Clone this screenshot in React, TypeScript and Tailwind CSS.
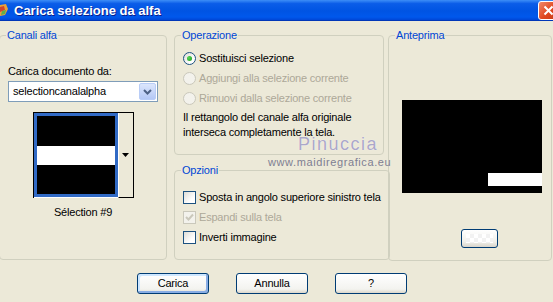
import React from "react";

function Radio({ label, checked, disabled }: { label: string; checked?: boolean; disabled?: boolean }) {
  return (
    <div className="flex h-[20px] items-center gap-[3px]">
      <span
        className={
          disabled
            ? "flex h-[13px] w-[13px] items-center justify-center rounded-full border border-[#CAC8BB] bg-[#F3F2EC]"
            : "flex h-[13px] w-[13px] items-center justify-center rounded-full border border-[#1C5180] bg-[linear-gradient(135deg,#DCDCD7,#FFFFFF_70%)]"
        }
      >
        {checked && <span className="h-[5px] w-[5px] rounded-full bg-[radial-gradient(circle_at_35%_35%,#55D655,#1A9A1A)]" />}
      </span>
      <span className={disabled ? "whitespace-nowrap text-[#ACA899]" : "whitespace-nowrap text-black"}>{label}</span>
    </div>
  );
}

function Check({ label, checked, disabled }: { label: string; checked?: boolean; disabled?: boolean }) {
  return (
    <div className="flex h-[20px] items-center gap-[3px]">
      <span
        className={
          disabled
            ? "flex h-[13px] w-[13px] items-center justify-center border border-[#CAC8BB] bg-[#F3F2EC]"
            : "flex h-[13px] w-[13px] items-center justify-center border border-[#1C5180] bg-[linear-gradient(135deg,#DCDCD7,#FFFFFF_70%)]"
        }
      >
        {checked && (
          <svg width="9" height="9" viewBox="0 0 9 9">
            <path d="M1 4 L3.5 6.5 L8 1.5" fill="none" stroke={disabled ? "#CAC8BB" : "#21A121"} strokeWidth="2" />
          </svg>
        )}
      </span>
      <span className={disabled ? "whitespace-nowrap text-[#ACA899]" : "whitespace-nowrap text-black"}>{label}</span>
    </div>
  );
}

function XpButton({ label, isDefault }: { label: string; isDefault?: boolean }) {
  return (
    <button
      className={
        isDefault
          ? "h-[21px] w-[72px] rounded-[3px] border border-[#003C74] bg-[linear-gradient(to_bottom,#FFFFFF,#F3F3EF_80%,#DCD7CB)] text-black shadow-[inset_-2px_-2px_0_0_#89ADE4,inset_2px_2px_0_0_#CEE7FF]"
          : "h-[21px] w-[72px] rounded-[3px] border border-[#003C74] bg-[linear-gradient(to_bottom,#FFFFFF,#F3F3EF_80%,#DCD7CB)] text-black"
      }
    >
      {label}
    </button>
  );
}

export default function App() {
  return (
    <div className="relative h-[302px] w-[553px] overflow-hidden bg-[#ECE9D8] font-['Liberation_Sans',Arial,sans-serif] text-[11px] leading-[13px] tracking-[-0.2px] text-black">
      {/* title bar */}
      <div className="flex h-[21px] items-center border-b border-[#0036B8] bg-[linear-gradient(to_bottom,#3D8EF7_0%,#0B5DE8_18%,#0054E3_55%,#0058EC_85%,#0046D6_100%)]">
        <svg width="9" height="14" viewBox="0 0 9 14">
          <path d="M0 2 L6 1 L8 6 L5 12 L0 13 Z" fill="#E9A23B" />
          <path d="M0 4 L4 3 L5 7 L0 9 Z" fill="#D2452D" />
          <path d="M2 8 L6 7 L5 11 L1 12 Z" fill="#5FAF4A" />
        </svg>
        <span className="ml-[5px] text-[13px] font-bold tracking-normal text-white [text-shadow:1px_1px_0_#0A1E8C]">
          Carica selezione da alfa
        </span>
        <div className="ml-auto mr-[-6px] flex h-[19px] w-[21px] items-center justify-center rounded-[3px] border border-white bg-[linear-gradient(135deg,#F08A6C,#E0481F_55%,#C43A16)]">
          <svg width="11" height="11" viewBox="0 0 11 11">
            <path d="M1.5 1.5 L9.5 9.5 M9.5 1.5 L1.5 9.5" stroke="white" strokeWidth="2" />
          </svg>
        </div>
      </div>

      {/* body */}
      <div className="flex items-start pt-[8px]">
        {/* Canali alfa */}
        <fieldset className="ml-[-1px] flex h-[231px] w-[166px] flex-col rounded-[4px] border border-[#D0D0BF] px-[8px]">
          <legend className="ml-[-2px] px-[1px] text-[#0046D5]">Canali alfa</legend>
          <div className="pt-[23px]">Carica documento da:</div>
          <div className="mt-[3px] flex h-[21px] w-[150px] items-center border border-[#7F9DB9] bg-white pl-[4px] pr-[1px]">
            <span className="flex-1">selectioncanalalpha</span>
            <span className="flex h-[17px] w-[17px] items-center justify-center rounded-[2px] border border-[#B9CDF7] bg-[linear-gradient(to_bottom,#DCE6FC,#B4C8F6)]">
              <svg width="9" height="6" viewBox="0 0 9 6">
                <path d="M1 1 L4.5 4.5 L8 1" fill="none" stroke="#4D6185" strokeWidth="2" />
              </svg>
            </span>
          </div>
          <div className="mx-auto mt-[10px] flex h-[86px] w-[101px] border-l border-t border-black">
            <div className="h-full w-[84px] border-b border-white">
              <div className="flex h-full flex-col border-[3px] border-[#316AC5] bg-black">
                <div className="flex-1" />
                <div className="h-[19px] bg-white" />
                <div className="flex-1" />
              </div>
            </div>
            <div className="flex flex-1 items-center justify-center border-b border-l border-r border-b-black border-l-white border-r-black bg-[#ECE9D8]">
              <svg width="7" height="4" viewBox="0 0 7 4">
                <path d="M0 0 L7 0 L3.5 4 Z" fill="black" />
              </svg>
            </div>
          </div>
          <div className="mt-[8px] text-center">Sélection #9</div>
        </fieldset>

        {/* middle column */}
        <div className="ml-[7px] flex w-[210px] flex-col gap-[9px]">
          <fieldset className="h-[126px] rounded-[4px] border border-[#D0D0BF] px-[8px]">
            <legend className="ml-[-2px] px-[1px] text-[#0046D5]">Operazione</legend>
            <div className="pt-[6px]">
              <Radio label="Sostituisci selezione" checked />
              <Radio label="Aggiungi alla selezione corrente" disabled />
              <Radio label="Rimuovi dalla selezione corrente" disabled />
            </div>
            <div className="mt-[2px] leading-[15px]">
              Il rettangolo del canale alfa originale
              <br />
              interseca completamente la tela.
            </div>
          </fieldset>
          <fieldset className="h-[96px] rounded-[4px] border border-[#D0D0BF] px-[8px]">
            <legend className="ml-[-2px] px-[1px] text-[#0046D5]">Opzioni</legend>
            <div className="pt-[10px]">
              <Check label="Sposta in angolo superiore sinistro tela" />
              <Check label="Espandi sulla tela" checked disabled />
              <Check label="Inverti immagine" />
            </div>
          </fieldset>
        </div>

        {/* Anteprima */}
        <fieldset className="ml-[4px] h-[232px] w-[164px] rounded-[4px] border border-[#D0D0BF] px-[8px]">
          <legend className="ml-[-2px] px-[1px] text-[#0046D5]">Anteprima</legend>
          <div className="ml-[5px] mt-[58px] flex h-[93px] w-[140px] flex-col items-end justify-end bg-black pb-[7px]">
            <div className="h-[13px] w-[54px] bg-white" />
          </div>
          <div className="ml-[64px] mt-[36px] h-[19px] w-[37px] rounded-[3px] border border-[#003C74] bg-[linear-gradient(to_bottom,#FFFFFF,#F0F0EA_70%,#D8D4CA)] p-[4px]">
            <div className="h-full w-full bg-[repeating-conic-gradient(#F2F2F2_0_25%,#FFFFFF_0_50%)] bg-[length:8px_8px]" />
          </div>
        </fieldset>
      </div>

      {/* buttons */}
      <div className="mt-[12px] flex gap-[27px] pl-[137px]">
        <XpButton label="Carica" isDefault />
        <XpButton label="Annulla" />
        <XpButton label="?" />
      </div>

      {/* watermark */}
      <div className="absolute left-[298px] top-[135px] text-[18px] leading-[18px] tracking-[1.5px] text-[#ABA7C9] [text-shadow:0_0_1px_#ffffff]">
        Pinuccia
      </div>
      <div className="absolute left-[268px] top-[156px] text-[11px] leading-[13px] tracking-[0.6px] text-[#7E7E92]">
        www.maidiregrafica.eu
      </div>
    </div>
  );
}
